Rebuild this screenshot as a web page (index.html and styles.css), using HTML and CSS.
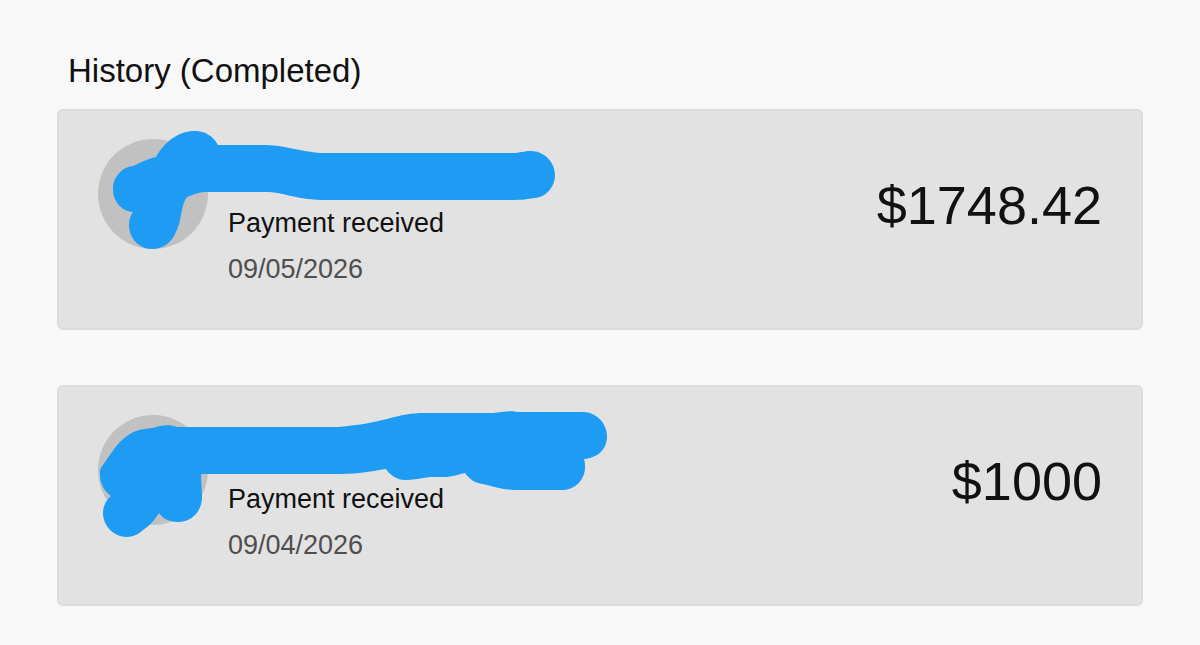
FILE: index.html
```html
<!DOCTYPE html>
<html lang="en">
<head>
    <meta charset="UTF-8">
    <meta name="viewport" content="width=device-width, initial-scale=1.0">
    <title>History</title>
    <link rel="stylesheet" href="styles.css">
</head>
<body>
    <main class="history">
        <h1>History (Completed)</h1>

        <ul class="payments">
            <li class="payment">
                <div class="avatar"></div>
                <div class="details">
                    <p class="status">Payment received</p>
                    <time class="date" datetime="2026-09-05">09/05/2026</time>
                </div>
                <p class="amount">$1748.42</p>
                <svg class="scribble" width="600" height="200" viewBox="59 111 600 200" aria-hidden="true">
                    <path d="M218 145H262C285 145 292 150 320 153H512C520 153 524 151 531 151C544 151 555 162 555 175C555 187 546 197 535 198C528 199 522 200 512 200H322C292 199 285 192 265 192H207C199 192 195 194 187 197C180 206 183 219 175 234C171 243 162 249 152 249C139 249 129 238 129 225C129 220 130 216 133 212C121 211 113 201 113 189C113 177 122 167 133 166C142 162 147 159 156 157C165 141 179 131 195 131C205 131 213 136 218 145Z"/>
                </svg>
            </li>
            <li class="payment">
                <div class="avatar"></div>
                <div class="details">
                    <p class="status">Payment received</p>
                    <time class="date" datetime="2026-09-04">09/04/2026</time>
                </div>
                <p class="amount">$1000</p>
                <svg class="scribble" width="600" height="200" viewBox="59 387 600 200" aria-hidden="true">
                    <path d="M177 427H338C361 425 375 422 387 419C401 415 412 413 424 413H493C502 412 512 410 517 412H583C596 412 607 423 607 436C607 449 598 458 584 459C585 462 585 465 585 467C585 480 575 490 562 490H515C505 490 494 487 483 484C475 483 469 479 465 473C458 475 453 476 447 477H430C421 478 413 480 405 480C397 480 390 475 386 469C371 471 360 474 340 474H201L202 497C202 511 192 522 178 522C170 522 163 519 159 513C155 520 149 526 143 530C139 534 133 537 127 537C114 537 103 526 103 513C103 506 106 500 111 496C104 491 100 483 100 475C99 467 104 465 107 459C113 451 118 442 127 436C136 429 144 429 153 428C161 425 169 424 177 427Z"/>
                </svg>
            </li>
        </ul>
    </main>
</body>
</html>
```
FILE: styles.css
```css
*, *:before, *:after {
    box-sizing: border-box;
}
body {
    margin: 0;
    background: #f8f8f8;
    color: #111;
    font-family: "Liberation Sans", Arial, sans-serif;
}
.history {
    padding: 51px 57px 39px;
}
h1 {
    margin: 0 11px 18px;
    font-size: 33px;
    line-height: 40px;
    font-weight: normal;
}
.payments {
    display: flex;
    flex-direction: column;
    gap: 55px;
    margin: 0;
    padding: 0;
    list-style: none;
}
.payment {
    position: relative;
    display: flex;
    align-items: flex-start;
    gap: 20px;
    padding: 28px 39px 36px;
    background: #e2e2e2;
    border: 2px solid #dcdcdc;
    border-radius: 6px;
}
.avatar {
    flex: none;
    width: 110px;
    height: 110px;
    border-radius: 50%;
    background: #c1c1c1;
}
.details {
    flex: 1;
    padding-top: 61px;
    font-size: 27px;
    line-height: 46px;
}
.status {
    margin: 0;
}
.date {
    display: block;
    color: #4f4f4f;
}
.amount {
    margin: 0;
    padding-top: 34px;
    font-size: 54px;
    line-height: 64px;
}
.scribble {
    position: absolute;
    top: 0;
    left: 0;
    fill: #1e9bf3;
    pointer-events: none;
}
```
